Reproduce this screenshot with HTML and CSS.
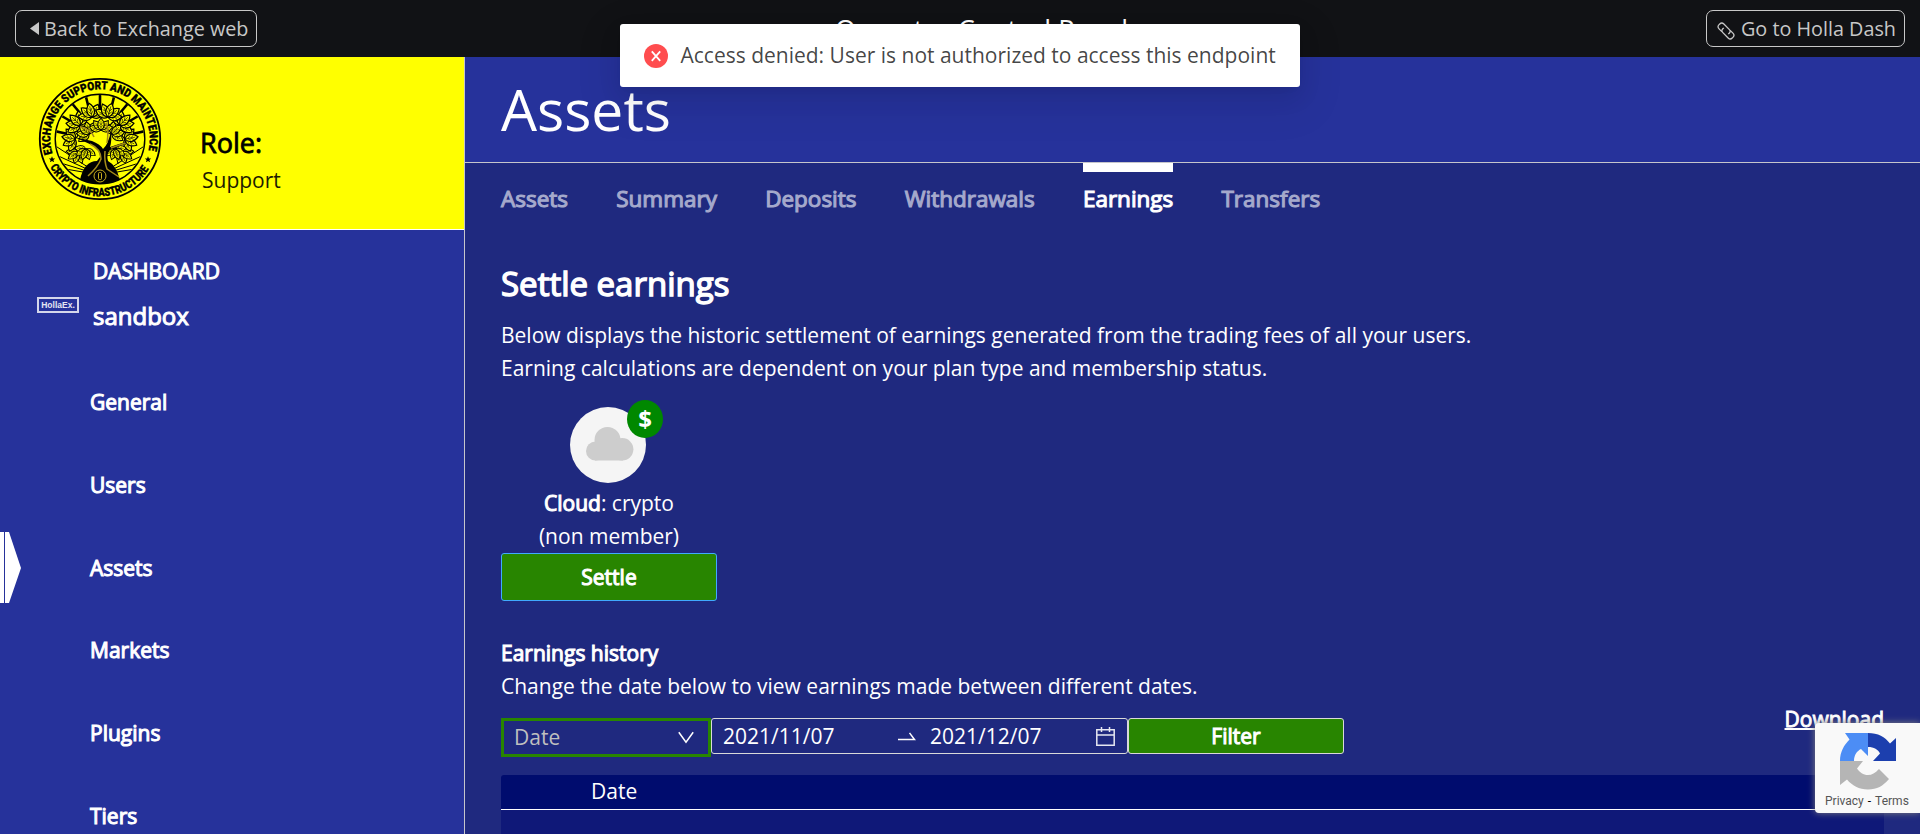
FILE: index.html
```html
<!DOCTYPE html>
<html lang="en">
<head>
<meta charset="utf-8">
<title>Operator Control Panel</title>
<link rel="stylesheet" href="styles.css">
</head>
<body>
<header class="topbar">
  <a class="top-btn back"><svg width="9" height="13" viewBox="0 0 9 13"><path d="M9 0v13L0 6.5z" fill="#c8c8c8"/></svg>Back to Exchange web</a>
  <div class="top-title">Operator Control Panel</div>
  <a class="top-btn dash"><svg width="18" height="18" viewBox="0 0 18 18" fill="none" stroke="#c8c8c8" stroke-width="1.3"><g transform="rotate(45 9 9)"><path d="M6.500 12.400H2.600Q-.4 12.400-.4 9.400V8.400Q-.4 5.600 2.600 5.600H10.400Q12.800 5.600 12.800 8.300V9.600"/><path d="M11.500 5.600h3.900Q18.400 5.600 18.400 8.600V9.600Q18.400 12.400 15.400 12.400H7.600Q5.200 12.400 5.200 9.700V8.400"/></g></svg>Go to Holla Dash</a>
</header>

<div class="layout">
  <aside class="sidebar">
    <div class="brand">
      <svg class="seal" width="124" height="124" viewBox="-62 -62 124 124">
        <defs>
          <path id="arc-top" d="M-47.5 14.700A49.700 49.700 0 1 1 47.500 14.700"/>
          <path id="arc-bottom" d="M-50 28A57.3 57.3 0 0 0 50 28"/>
          <clipPath id="disc"><circle r="44"/></clipPath>
          <g id="leaf"><path d="M0 0C-5-3-5-9 0-14C5-9 5-3 0 0Z" fill="#ff0" stroke="#000" stroke-width="1.2"/><path d="M0 0V-11M0-3L-2.4-6M0-3L2.4-6M0-6L-2-9M0-6L2-9" stroke="#000" stroke-width=".6" fill="none"/></g>
          <g id="spray"><use href="#leaf" transform="rotate(-75)"/><use href="#leaf" transform="rotate(75)"/><use href="#leaf" transform="rotate(-38)"/><use href="#leaf" transform="rotate(38)"/><use href="#leaf"/></g>
        </defs>
        <circle r="60.2" fill="none" stroke="#000" stroke-width="1.8"/>
        <circle r="44.8" fill="none" stroke="#000" stroke-width="1.4"/>
        <g clip-path="url(#disc)" stroke="#000">
          <path stroke-width="2.6" d="M0-46V-30M-15-46L-11-30M15-46L11-30M-30-38L-20-26M30-38L20-26M-40-24L-28-17M40-24L28-17M-46-8L-32-5M46-8L32-5"/>
          <path stroke-width="1" d="M0 36L-46 6M0 36L-46 15M0 36L-46 22M0 36L-46 28M0 36L46 6M0 36L46 15M0 36L46 22M0 36L46 28"/>
        </g>
        <g>
          <use href="#spray" transform="translate(-22 13) rotate(-125) scale(.85)"/>
          <use href="#spray" transform="translate(22 13) rotate(125) scale(.85)"/>
          <use href="#spray" transform="translate(-25 0) rotate(-80) scale(.95)"/>
          <use href="#spray" transform="translate(25 0) rotate(80) scale(.95)"/>
          <use href="#spray" transform="translate(-20 -14) rotate(-45)"/>
          <use href="#spray" transform="translate(20 -14) rotate(45)"/>
          <use href="#spray" transform="translate(-8 -22) rotate(-12)"/>
          <use href="#spray" transform="translate(8 -22) rotate(15)"/>
          <use href="#spray" transform="translate(-14 10) rotate(200) scale(.8)"/>
          <use href="#spray" transform="translate(15 10) rotate(160) scale(.8)"/>
          <use href="#spray" transform="translate(-11 -5) rotate(-50) scale(.9)"/>
          <use href="#spray" transform="translate(12 -5) rotate(45) scale(.9)"/>
          <use href="#spray" transform="translate(1 -9) scale(.85)"/>
        </g>
        <path d="M-20 41Q-16 22-3 22L0 18Q0 9-8 6L-26-2-8 2Q0 5 3 10Q8 6 11-8Q12 2 10 8L28 2Q18 9 10 11Q6 16 8 22Q16 26 20 41Q0 48-20 41Z"/>
        <path d="M-12 37Q-2 28 1 20Q1 10-10 5M5 12Q4 22 7 30L19 38M-20-12Q-9-10-6-2M6-16Q9-8 7 4M11 9L25 4" fill="none" stroke="#a38a18" stroke-width="1.5"/>
        <circle cy="37" r="6" fill="#000" stroke="#c9ae20"/><rect x="-1.5" y="33.5" width="3" height="7" rx="1" fill="none" stroke="#c9ae20"/>
        <text class="seal-text"><textPath href="#arc-top" textLength="182" lengthAdjust="spacingAndGlyphs">EXCHANGE SUPPORT AND MAINTENCE</textPath></text>
        <text class="seal-text"><textPath href="#arc-bottom" textLength="119" lengthAdjust="spacingAndGlyphs">CRYPTO INFRASTRUCTURE</textPath></text>
        <path d="M-48 17.2l.9 2.2 2.3.1-1.8 1.5.7 2.3-2.1-1.3-2.1 1.3.7-2.3-1.8-1.5 2.3-.1zM48 17.2l.9 2.2 2.3.1-1.8 1.5.7 2.3-2.1-1.3-2.1 1.3.7-2.3-1.8-1.5 2.3-.1z"/>
      </svg>
      <div class="role">
        <div class="role-label">Role:</div>
        <div class="role-name">Support</div>
      </div>
    </div>

    <div class="exchange">
      <div class="holla-logo">HollaEx.</div>
      <div class="exchange-text">
        <div class="exchange-head">DASHBOARD</div>
        <div class="exchange-name">sandbox</div>
      </div>
    </div>

    <nav class="menu">
      <a class="menu-item">General</a>
      <a class="menu-item">Users</a>
      <a class="menu-item"><svg class="pointer" width="21" height="71" viewBox="0 0 21 71" fill="#fff"><path d="M0 0h4v71H0zM5 0h4l12 36L9 71H5z"/></svg>Assets</a>
      <a class="menu-item">Markets</a>
      <a class="menu-item">Plugins</a>
      <a class="menu-item">Tiers</a>
    </nav>
  </aside>

  <main class="content">
    <div class="page-head">Assets</div>
    <nav class="tabs">
      <a class="tab">Assets</a>
      <a class="tab">Summary</a>
      <a class="tab">Deposits</a>
      <a class="tab">Withdrawals</a>
      <a class="tab active">Earnings</a>
      <a class="tab">Transfers</a>
    </nav>

    <section class="body">
      <h2 class="section-title">Settle earnings</h2>
      <p class="text">Below displays the historic settlement of earnings generated from the trading fees of all your users.<br>Earning calculations are dependent on your plan type and membership status.</p>

      <div class="plan">
        <div class="plan-icon">
          <svg width="48" height="34" viewBox="0 0 48 34" fill="#cdcdcd"><circle cx="9.5" cy="24" r="9.5"/><circle cx="21.5" cy="13" r="13"/><circle cx="36.2" cy="22.3" r="11.2"/><path d="M9 14h28v19.5H9z"/></svg>
          <span class="plan-badge">$</span>
        </div>
        <div class="text"><span class="strong">Cloud</span>: crypto</div>
        <div class="text">(non member)</div>
        <button class="settle">Settle</button>
      </div>

      <div class="text strong">Earnings history</div>
      <p class="text">Change the date below to view earnings made between different dates.</p>

      <div class="toolbar">
        <div class="filters">
          <div class="select"><span>Date</span><svg width="16" height="13" viewBox="0 0 16 13" fill="none" stroke="#fff" stroke-width="1.5"><path d="M.8 1.2L8 11.2 15.2 1.2"/></svg></div>
          <div class="range">
            <span class="range-date">2021/11/07</span>
            <svg class="range-arrow" width="18" height="9" viewBox="0 0 18 9" fill="none" stroke="#fff" stroke-width="1.5"><path d="M0 7.500h16.500L11.500.9"/></svg>
            <span class="range-date">2021/12/07</span>
            <svg class="range-cal" width="19" height="19" viewBox="0 0 19 19" fill="none" stroke="#e6e7f1" stroke-width="1.5"><path d="M.8 2.8h17.4v15.4H.8zM.8 8h17.4M5.5 0v5M13.5 0v5"/></svg>
          </div>
          <button class="filter">Filter</button>
        </div>
        <a class="download">Download</a>
      </div>

      <div class="table">
        <div class="table-head">Date</div>
        <div class="table-body"></div>
      </div>
    </section>
  </main>
</div>

<div class="toast">
  <svg width="24" height="24" viewBox="0 0 24 24"><circle cx="12" cy="12" r="12" fill="#ff4d4f"/><path d="M7.8 7.3l8.4 9.6M16.2 7.3l-8.4 9.6" stroke="#fff" stroke-width="1.8"/></svg>
  <span>Access denied: User is not authorized to access this endpoint</span>
</div>

<div class="captcha">
  <svg width="56" height="57" viewBox="0 0 56 57">
    <path d="M28 0v23l-7-7c-4 2-7 6-7 12H0C0 19 4 12 9.500 6.500L5 0z" fill="#4c8df5"/>
    <path d="M28 0c10 0 17 4 22 10.500L56 5v23H33l7-7.500c-2-4-6-6.500-12-6.500z" fill="#1c3fae"/>
    <path d="M0 28h23l-6 7.500c3 4 6 6.500 11 6.500 4 0 7-2 11-6l10 10c-6 7-12 10.500-21 10.500-9 0-16-4-21-10L0 52z" fill="#b5b5b5"/>
  </svg>
  <div class="captcha-links"><span>Privacy</span><b>-</b><span>Terms</span></div>
</div>
</body>
</html>
```
FILE: styles.css
```css
* { box-sizing: border-box; }

body {
  margin: 0;
  height: 834px;
  overflow: hidden;
  background: #1f297f;
  color: #fff;
  font-family: "Open Sans", "Noto Sans", sans-serif;
  font-size: 21px;
  line-height: 33px;
}

svg { display: block; flex: none; }

.topbar {
  height: 57px;
  padding: 0 15px;
  display: flex;
  align-items: center;
  justify-content: space-between;
  background: #111215;
}

.top-btn {
  height: 37px;
  display: flex;
  align-items: center;
  border: 1px solid #c8c8c8;
  border-radius: 7px;
  color: #c8c8c8;
  font-size: 19.8px;
  white-space: nowrap;
}

.back { width: 242px; padding-left: 14px; gap: 5px; }
.dash { width: 199px; padding-left: 10px; gap: 6px; }
.dash svg { margin-top: 4px; }

.top-title { font-size: 27px; padding-top: 1px; }

.layout { display: flex; height: 777px; }

.sidebar {
  width: 465px;
  flex: none;
  border-right: 1px solid #c5c5cb;
  background: #26329b;
}

.brand {
  height: 173px;
  display: flex;
  padding-left: 38px;
  border-bottom: 1px solid #fff;
  background: #ff0;
  color: #000;
}

.seal { margin-top: 20px; }
.seal-text { font: 900 11.5px Roboto, sans-serif; fill: #000; stroke: #000; stroke-width: .35px; }

.role { padding: 65px 0 0 38px; }
.role-label { font-size: 27px; line-height: 42px; -webkit-text-stroke: .8px; }
.role-name { padding-left: 2px; color: #1c1c00; }

.exchange { display: flex; padding: 25px 0 0 37px; }

.holla-logo {
  width: 42px;
  height: 16px;
  margin-top: 42px;
  border: 2px solid #d4d6eb;
  color: #e4e5f3;
  font: bold 8.5px/12px "Liberation Sans", sans-serif;
  text-align: center;
}

.exchange-text { padding-left: 14px; -webkit-text-stroke: 1.05px; }
.exchange-name { margin-top: 9px; font-size: 24px; line-height: 38px; }

.menu { display: flex; flex-direction: column; gap: 11.8px; margin-top: 31.4px; }

.menu-item {
  position: relative;
  height: 71px;
  flex: none;
  padding: 19.6px 0 0 90px;
  -webkit-text-stroke: 1.05px;
}

.pointer { position: absolute; left: 0; top: 0; }

.content { flex: 1; min-width: 0; }

.page-head {
  height: 106px;
  padding: 22px 36px 0;
  border-bottom: 1px solid #c5c5cb;
  background: #26329b;
  font-size: 57px;
  line-height: 60px;
}

.tabs { display: flex; gap: 48.15px; padding-left: 36px; }

.tab {
  padding-top: 9px;
  border-top: 9px solid transparent;
  color: #a5a9cc;
  font-size: 22.5px;
  line-height: 35px;
  -webkit-text-stroke: 1.1px;
}

.tab.active { border-top-color: #fff; color: #fff; }

.body { padding: 42px 36px 0; }

.section-title {
  margin: 0 0 9px;
  font-size: 33px;
  line-height: 52px;
  font-weight: 400;
  -webkit-text-stroke: 1.4px;
}

.text { margin: 0; white-space: nowrap; }
.strong { -webkit-text-stroke: 1.05px; }

.plan {
  width: 216px;
  margin: 22px 0 36px;
  text-align: center;
}

.plan-icon {
  position: relative;
  width: 76px;
  height: 76px;
  margin: 0 auto 4px 69px;
  padding: 20px 0 0 16px;
  border-radius: 50%;
  background: #f5f5f5;
}

.plan-badge {
  position: absolute;
  left: 57px;
  top: -7px;
  width: 36px;
  height: 38px;
  border-radius: 50%;
  background: #080;
  font-weight: 700;
  font-size: 24px;
  line-height: 38px;
}

button {
  display: block;
  padding: 0;
  border-radius: 3px;
  background: #288500;
  color: #fff;
  font: inherit;
  -webkit-text-stroke: 1.05px;
}

.settle { width: 216px; height: 48px; border: 1px solid #40a9ff; }

.toolbar { display: flex; justify-content: space-between; }
.filters { display: flex; padding-top: 15px; }

.select {
  width: 210px;
  height: 39px;
  display: flex;
  align-items: center;
  justify-content: space-between;
  padding: 0 14px 0 10px;
  border: 3px solid #288500;
  color: #bfbfbf;
}

.range {
  width: 417px;
  height: 36px;
  display: flex;
  align-items: center;
  padding-left: 11px;
  border: 1px solid #d9d9d9;
  border-radius: 3px;
}

.range-date { width: 175px; padding-top: 1px; }
.range-arrow { margin-right: 14px; }
.range-date + .range-cal { margin-left: -9px; }

.filter { width: 216px; height: 36px; border: 1px solid #d9d9d9; }

.download { text-decoration: underline; text-decoration-thickness: 2px; -webkit-text-stroke: .9px; }

.table { margin-top: 18px; }

.table-head {
  height: 35px;
  padding-left: 90px;
  border-bottom: 1px solid #fff;
  border-radius: 3px 3px 0 0;
  background: #000c6e;
  line-height: 32px;
}

.table-body { height: 60px; background: #0f1878; }

.toast {
  position: absolute;
  left: 620px;
  top: 24px;
  width: 680px;
  height: 63px;
  display: flex;
  align-items: center;
  gap: 12.5px;
  padding: 0 24px;
  border-radius: 3px;
  background: #fff;
  color: rgba(0, 0, 0, .74);
  white-space: nowrap;
  box-shadow: 0 4px 9px -6px rgba(0, 0, 0, .12), 0 9px 24px rgba(0, 0, 0, .08), 0 13px 42px 12px rgba(0, 0, 0, .05);
}

.captcha {
  position: absolute;
  right: 0;
  top: 723px;
  width: 105px;
  height: 90px;
  padding: 10px 0 0 25px;
  border-radius: 4px 0 0 4px;
  background: #f9f9f9;
  box-shadow: 0 0 7px #808080;
}

.captcha-links {
  display: flex;
  gap: 4px;
  margin: 4px 0 0 -15px;
  color: #555;
  font: 12px/14px Roboto, sans-serif;
  white-space: nowrap;
}

.captcha-links b { color: #000; font-weight: 400; }
```
